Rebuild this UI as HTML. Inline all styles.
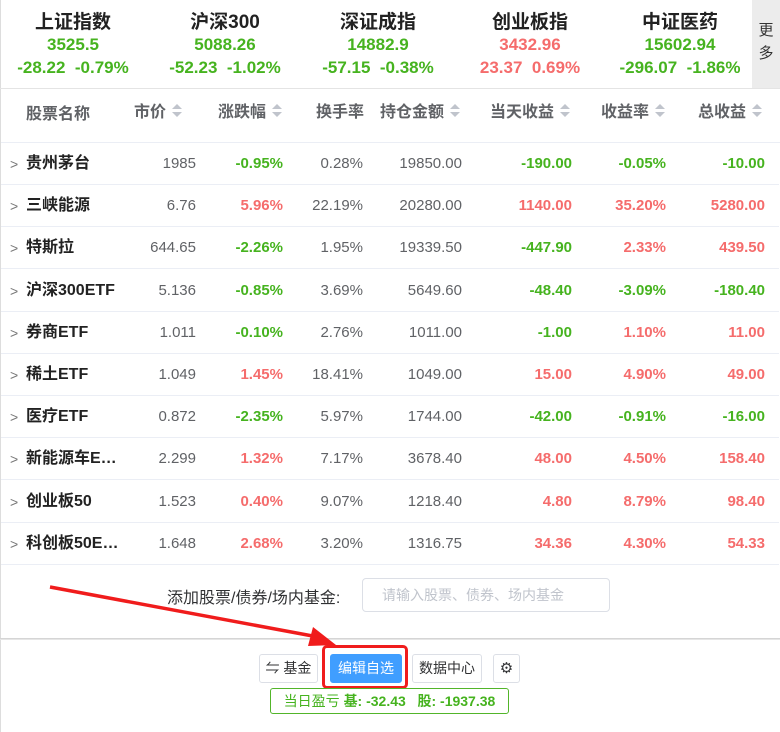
<!DOCTYPE html>
<html><head><meta charset="utf-8"><style>
*{margin:0;padding:0;box-sizing:border-box}
body{width:780px;height:732px;background:#fff;font-family:"Liberation Sans","Noto Sans CJK SC",sans-serif;position:relative;overflow:hidden;color:#303133}
.a{position:absolute;white-space:nowrap}
.g{color:#46b31f}.r{color:#f56c6c}
.idx{position:absolute;top:11px;width:150px;text-align:center;font-weight:bold}
.idx .n{font-size:19px;color:#222;line-height:24px}
.idx .v{font-size:17px;line-height:20px}
.idx .c{font-size:17px;line-height:26px}
.hd{position:absolute;top:102px;font-size:16px;color:#606266;font-weight:bold;line-height:22px}
.sort{display:inline-block;width:10px;height:14px;vertical-align:middle;margin-left:6px;position:relative;top:-2px}
.sort:before{content:"";position:absolute;left:0;top:0;border:5px solid transparent;border-bottom:5px solid #c0c4cc;border-top:0}
.sort:after{content:"";position:absolute;left:0;top:8px;border:5px solid transparent;border-top:5px solid #c0c4cc;border-bottom:0}
.row{position:absolute;left:1px;width:778px;height:42px;border-bottom:1px solid #ebeef5;font-size:15px}
.row span{position:absolute;top:0;line-height:42px;white-space:nowrap}
.nm{left:25px;font-weight:bold;color:#222;font-size:16px}
.ch{left:9px;color:#777;font-size:14px}
.rt{text-align:right}
.btn{position:absolute;top:654px;height:29px;border:1px solid #dcdfe6;border-radius:3px;font-size:14px;line-height:27px;text-align:center;color:#303133;background:#fff}
</style></head><body>
<div class="a" style="left:0;top:0;width:1px;height:732px;background:#ddd"></div>
<div class="idx" style="left:-2px"><div class="n">上证指数</div><div class="v g">3525.5</div><div class="c g">-28.22&nbsp; -0.79%</div></div>
<div class="idx" style="left:150px"><div class="n">沪深300</div><div class="v g">5088.26</div><div class="c g">-52.23&nbsp; -1.02%</div></div>
<div class="idx" style="left:303px"><div class="n">深证成指</div><div class="v g">14882.9</div><div class="c g">-57.15&nbsp; -0.38%</div></div>
<div class="idx" style="left:455px"><div class="n">创业板指</div><div class="v r">3432.96</div><div class="c r">23.37&nbsp; 0.69%</div></div>
<div class="idx" style="left:605px"><div class="n">中证医药</div><div class="v g">15602.94</div><div class="c g">-296.07&nbsp; -1.86%</div></div>
<div class="a" style="left:752px;top:0;width:28px;height:88px;background:#ececec;font-size:15px;color:#333;text-align:center;line-height:23px;padding-top:19px;white-space:normal">更<br>多</div>
<div class="a" style="left:0;top:88px;width:780px;height:1px;background:#e4e4e4"></div>

<div class="hd" style="left:26px;top:104px">股票名称</div>
<div class="hd" style="left:134px">市价<i class="sort"></i></div>
<div class="hd" style="left:218px">涨跌幅<i class="sort"></i></div>
<div class="hd" style="left:316px">换手率</div>
<div class="hd" style="left:380px">持仓金额<i class="sort"></i></div>
<div class="hd" style="left:490px">当天收益<i class="sort"></i></div>
<div class="hd" style="left:601px">收益率<i class="sort"></i></div>
<div class="hd" style="left:698px">总收益<i class="sort"></i></div>
<div class="a" style="left:1px;top:142px;width:779px;height:1px;background:#ebeef5"></div>

<div id="rows"></div>
<script>
var d=[["贵州茅台","1985","-0.95%","0.28%","19850.00","-190.00","-0.05%","-10.00"],
["三峡能源","6.76","5.96%","22.19%","20280.00","1140.00","35.20%","5280.00"],
["特斯拉","644.65","-2.26%","1.95%","19339.50","-447.90","2.33%","439.50"],
["沪深300ETF","5.136","-0.85%","3.69%","5649.60","-48.40","-3.09%","-180.40"],
["券商ETF","1.011","-0.10%","2.76%","1011.00","-1.00","1.10%","11.00"],
["稀土ETF","1.049","1.45%","18.41%","1049.00","15.00","4.90%","49.00"],
["医疗ETF","0.872","-2.35%","5.97%","1744.00","-42.00","-0.91%","-16.00"],
["新能源车E…","2.299","1.32%","7.17%","3678.40","48.00","4.50%","158.40"],
["创业板50","1.523","0.40%","9.07%","1218.40","4.80","8.79%","98.40"],
["科创板50E…","1.648","2.68%","3.20%","1316.75","34.36","4.30%","54.33"]];
var R=[196,283,363,462,572,666,765],h="";
for(var i=0;i<d.length;i++){var r=d[i],t=143+i*42.2;
h+='<div class="row" style="top:'+t+'px"><span class="ch">&gt;</span><span class="nm">'+r[0]+'</span>';
for(var j=1;j<8;j++){var c="#606266",b="";if(j==2||j>=5){c=r[j][0]=="-"?"#46b31f":"#f56c6c";b="font-weight:bold;"}
h+='<span class="rt" style="right:'+(779-R[j-1])+'px;color:'+c+';'+b+'">'+r[j]+'</span>';}
h+='</div>';}
document.getElementById("rows").innerHTML=h;
</script>

<div class="a" style="left:167px;top:584px;font-size:16px;color:#303133">添加股票/债券/场内基金:</div>
<div class="a" style="left:362px;top:578px;width:248px;height:34px;border:1px solid #dcdfe6;border-radius:4px;font-size:14px;color:#c0c4cc;line-height:32px;padding-left:19px;overflow:hidden">请输入股票、债券、场内基金</div>
<div class="a" style="left:0;top:638px;width:780px;height:2px;background:linear-gradient(#ccc,#eee)"></div>

<div class="btn" style="left:259px;width:59px">⇋ 基金</div>
<div class="btn" style="left:330px;width:72px;background:#409eff;border-color:#409eff;color:#fff">编辑自选</div>
<div class="a" style="left:322px;top:645px;width:86px;height:44px;border:3px solid #f01c1c;border-radius:5px"></div>
<div class="btn" style="left:412px;width:70px">数据中心</div>
<div class="btn" style="left:493px;width:27px;font-size:15px">⚙</div>
<div class="a" style="left:270px;top:688px;width:239px;height:26px;border:1px solid #52b52a;border-radius:3px;font-size:14px;line-height:24px;text-align:center;color:#46b31f">当日盈亏 <b>基: -32.43 &nbsp; 股: -1937.38</b></div>

<svg class="a" style="left:0;top:0" width="780" height="732"><line x1="50" y1="587" x2="318" y2="637" stroke="#f01c1c" stroke-width="3.5"/><polygon points="336,645 313,627 308,646" fill="#f01c1c"/></svg>
</body></html>
